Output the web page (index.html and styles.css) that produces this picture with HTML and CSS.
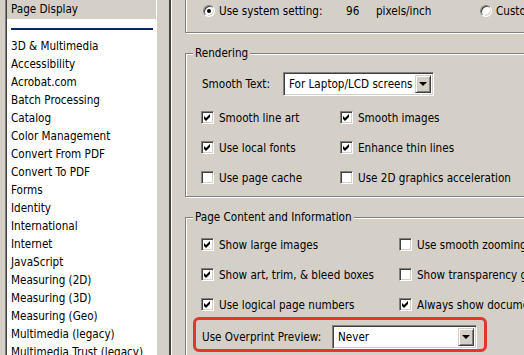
FILE: index.html
```html
<!DOCTYPE html>
<html lang="en">
<head>
  <meta charset="UTF-8">
  <title>Preferences - Page Display</title>
  <link rel="stylesheet" href="styles.css">
</head>
<body>

  <div class="window">
    <div class="categories">
      <div class="cat-selected">Page Display</div>
      <div class="cat-divider"></div>
      <ul class="cat-list">
        <li>3D &amp; Multimedia</li>
        <li>Accessibility</li>
        <li>Acrobat.com</li>
        <li>Batch Processing</li>
        <li>Catalog</li>
        <li>Color Management</li>
        <li>Convert From PDF</li>
        <li>Convert To PDF</li>
        <li>Forms</li>
        <li>Identity</li>
        <li>International</li>
        <li>Internet</li>
        <li>JavaScript</li>
        <li>Measuring (2D)</li>
        <li>Measuring (3D)</li>
        <li>Measuring (Geo)</li>
        <li>Multimedia (legacy)</li>
        <li>Multimedia Trust (legacy)</li>
      </ul>
    </div>

    <div class="splitter"></div>

    <div class="settings">
      <div class="group group-resolution">
        <div class="res-row">
          <span class="radio checked"></span>
          <span class="res-label">Use system setting:</span>
          <span class="res-value">96</span>
          <span class="res-unit">pixels/inch</span>
          <span class="radio"></span>
          <span class="res-label">Custom resolution:</span>
        </div>
      </div>

      <div class="group group-rendering">
        <span class="group-title">Rendering</span>
        <div class="field-row">
          <span class="field-label">Smooth Text:</span>
          <div class="combo combo-smooth">
            <span class="combo-text">For Laptop/LCD screens</span>
            <span class="combo-btn"><span class="arrow"></span></span>
          </div>
        </div>
        <div class="check-grid check-grid-rendering">
          <label class="check"><span class="box on"></span>Smooth line art</label>
          <label class="check"><span class="box on"></span>Smooth images</label>
          <label class="check"><span class="box on"></span>Use local fonts</label>
          <label class="check"><span class="box on"></span>Enhance thin lines</label>
          <label class="check"><span class="box"></span>Use page cache</label>
          <label class="check"><span class="box"></span>Use 2D graphics acceleration</label>
        </div>
      </div>

      <div class="group group-content">
        <span class="group-title">Page Content and Information</span>
        <div class="check-grid check-grid-content">
          <label class="check"><span class="box on"></span>Show large images</label>
          <label class="check"><span class="box"></span>Use smooth zooming</label>
          <label class="check"><span class="box on"></span>Show art, trim, &amp; bleed boxes</label>
          <label class="check"><span class="box"></span>Show transparency grid</label>
          <label class="check"><span class="box on"></span>Use logical page numbers</label>
          <label class="check"><span class="box on"></span>Always show document page size</label>
        </div>
        <div class="highlight">
          <span class="field-label overprint-label">Use Overprint Preview:</span>
          <div class="combo combo-overprint">
            <span class="combo-text">Never</span>
            <span class="combo-btn"><span class="arrow"></span></span>
          </div>
        </div>
      </div>
    </div>
  </div>

</body>
</html>
```

FILE: styles.css
```css
* {
  margin: 0;
  padding: 0;
  box-sizing: border-box;
}

body, html {
  height: 100%;
  overflow: hidden;
  background-color: #d4d0c8;
  color: #000;
  font-family: 'DejaVu Sans Condensed', 'DejaVu Sans', sans-serif;
  font-size: 11.6px;
}

.window {
  display: flex;
  height: 355px;
}

/* category list on the left */
.categories {
  width: 152px;
  margin-left: 5px;
  background-color: #fff;
  border-left: 1px solid #808080;
  border-right: 1px solid #fff;
  box-shadow: inset 1px 0 0 #404040;
  padding-left: 1px;
  overflow: hidden;
}

.cat-selected {
  height: 19px;
  line-height: 19px;
  padding-left: 4px;
  background-color: #d4d0c8;
}

.cat-divider {
  height: 2px;
  margin: 9px 3px 7px 4px;
  background-color: #0a246a;
}

.cat-list {
  list-style: none;
}

.cat-list li {
  height: 18px;
  line-height: 18px;
  padding-left: 4px;
  white-space: nowrap;
}

.splitter {
  width: 3px;
  margin-left: 12px;
  border-left: 2px solid #404040;
  background-color: #fff;
}

/* settings pane */
.settings {
  flex: 1;
  min-width: 0;
  overflow: hidden;
  padding-left: 13px;
}

.group {
  width: 420px;
  border: 1px solid #808080;
  box-shadow: inset 1px 1px 0 #fff, 1px 1px 0 #fff;
}

.group-title {
  display: block;
  width: max-content;
  height: 14px;
  line-height: 14px;
  margin: -8px 0 0 7px;
  padding: 0 2px;
  background-color: #d4d0c8;
}

.group-resolution {
  margin-top: -12px;
  padding: 15px 0 14px 17px;
}

.res-row {
  display: flex;
  align-items: center;
  height: 14px;
  white-space: nowrap;
}

.res-label {
  margin-left: 4px;
}

.res-row .res-label:nth-child(2) {
  width: 127px;
}

.res-value {
  width: 30px;
}

.res-unit {
  width: 104px;
}

.radio {
  display: inline-block;
  flex: none;
  width: 12px;
  height: 12px;
  border-radius: 50%;
  background-color: #fff;
  border: 1px solid;
  border-color: #808080 #fff #fff #808080;
  box-shadow: inset 1px 1px 0 #404040, inset -1px -1px 0 #d4d0c8;
  position: relative;
}

.radio.checked::after {
  content: '';
  position: absolute;
  left: 3px;
  top: 3px;
  width: 4px;
  height: 4px;
  border-radius: 50%;
  background-color: #000;
}

.group-rendering {
  margin-top: 20px;
  padding-bottom: 12px;
}

.group-content {
  margin-top: 20px;
  padding-bottom: 40px;
}

.field-row {
  display: flex;
  align-items: center;
  margin: 12px 0 0 16px;
}

.field-label {
  width: 81px;
  white-space: nowrap;
}

.combo {
  display: flex;
  align-items: center;
  height: 24px;
  background-color: #fff;
  border: 1px solid;
  border-color: #808080 #fff #fff #808080;
  box-shadow: inset 1px 1px 0 #404040, inset -1px -1px 0 #d4d0c8;
  padding: 2px;
}

.combo-text {
  flex: 1;
  padding-left: 3px;
  white-space: nowrap;
}

.combo-btn {
  display: flex;
  align-items: center;
  justify-content: center;
  width: 16px;
  height: 100%;
  background-color: #d4d0c8;
  border: 1px solid;
  border-color: #d4d0c8 #404040 #404040 #d4d0c8;
  box-shadow: inset 1px 1px 0 #fff, inset -1px -1px 0 #808080;
}

.arrow {
  width: 0;
  height: 0;
  border-left: 4px solid transparent;
  border-right: 4px solid transparent;
  border-top: 4px solid #000;
}

.combo-smooth {
  width: 151px;
}

.check-grid {
  display: grid;
  row-gap: 17px;
  margin-left: 15px;
  white-space: nowrap;
}

.check-grid-rendering {
  grid-template-columns: 139px 1fr;
  margin-top: 15px;
}

.check-grid-content {
  grid-template-columns: 198px 1fr;
  margin-top: 14px;
}

.check {
  display: flex;
  align-items: center;
  height: 13px;
  gap: 5px;
}

.box {
  flex: none;
  width: 13px;
  height: 13px;
  background-color: #fff;
  border: 1px solid;
  border-color: #808080 #fff #fff #808080;
  box-shadow: inset 1px 1px 0 #404040, inset -1px -1px 0 #d4d0c8;
}

.box.on {
  background: #fff url("data:image/svg+xml,%3Csvg xmlns='http://www.w3.org/2000/svg' width='11' height='11'%3E%3Cpath d='M2 4 L4 6 L8 2 L8 5 L4 9 L2 7 Z' fill='%23000'/%3E%3C/svg%3E") no-repeat 0 0;
}

/* annotation box round the overprint setting */
.highlight {
  display: flex;
  align-items: center;
  width: 294px;
  height: 35px;
  margin: 6px 0 0 7px;
  padding: 5px 0 0 6px;
  border: 3px solid #e2372c;
  border-radius: 6px;
}

.overprint-label {
  width: 130px;
}

.combo-overprint {
  width: 145px;
}
```
